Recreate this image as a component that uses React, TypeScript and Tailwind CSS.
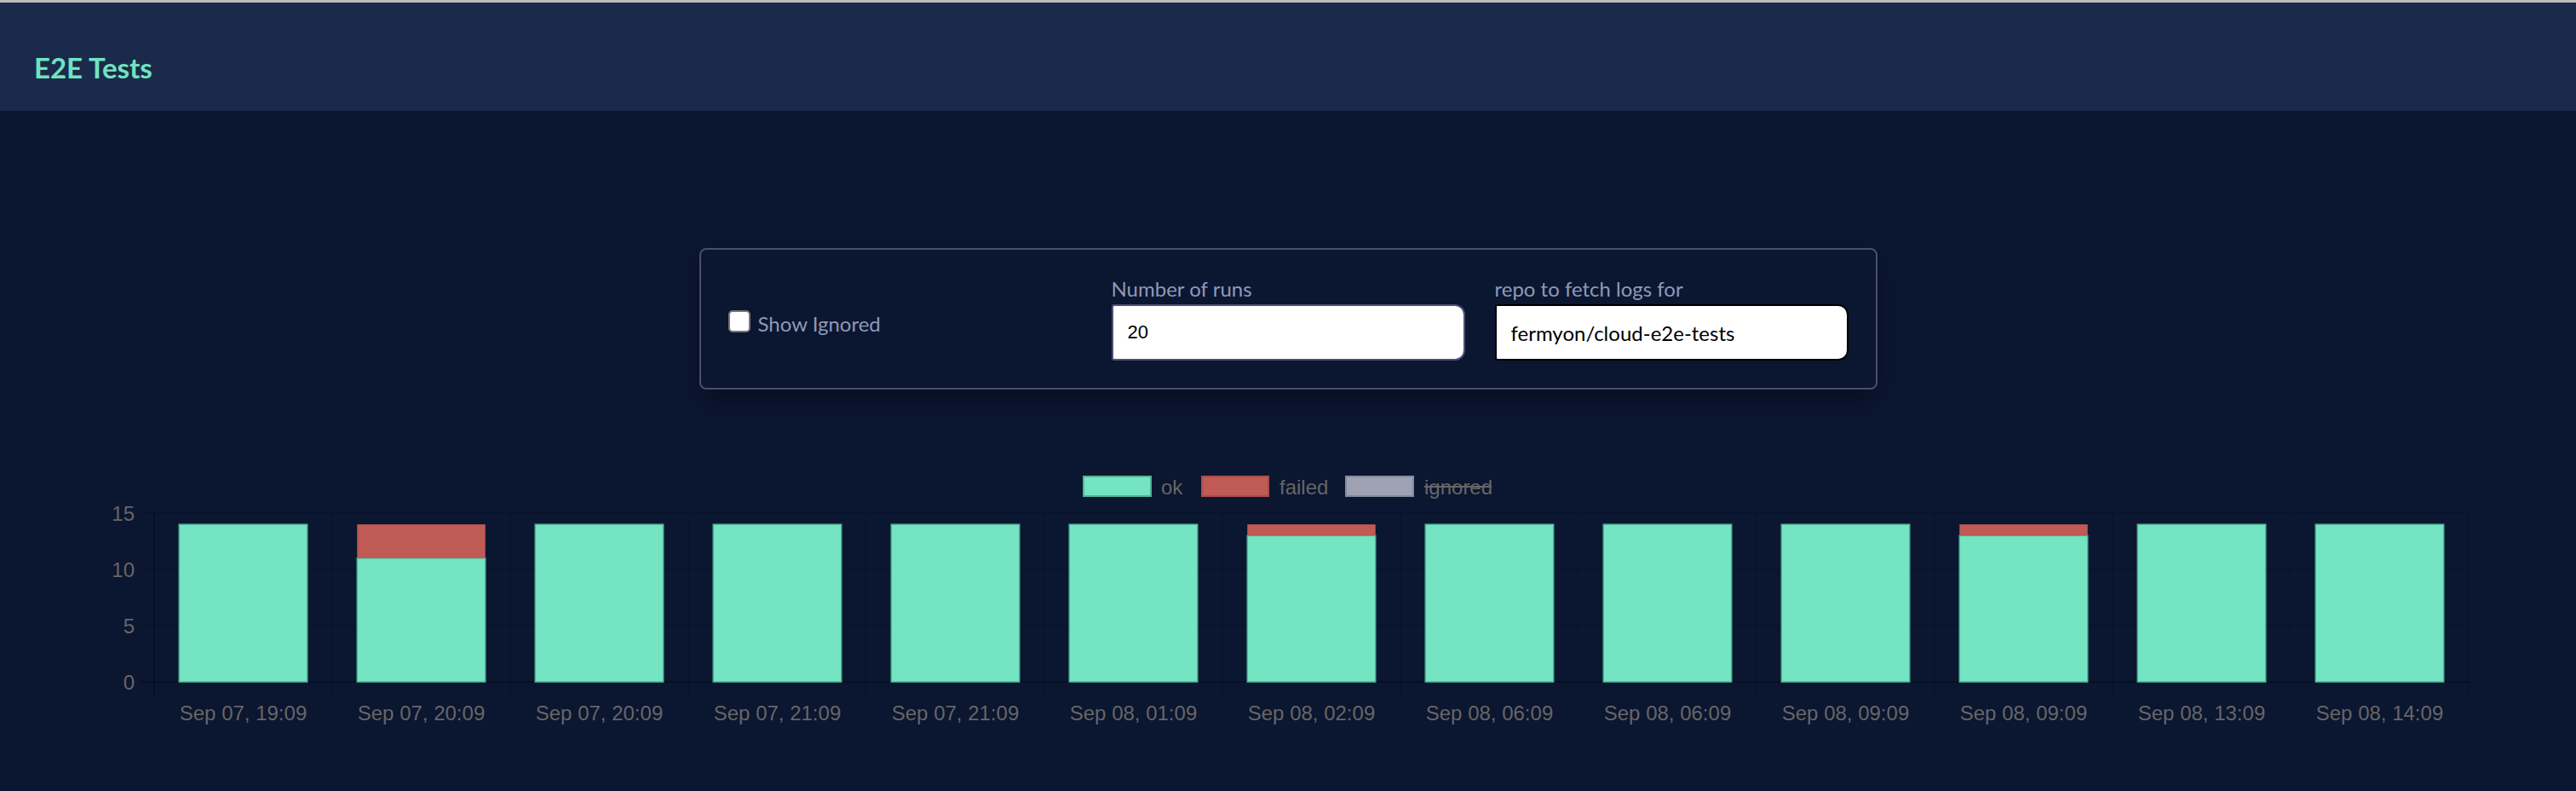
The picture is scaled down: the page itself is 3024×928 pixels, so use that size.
import { useState } from 'react';

type Run = { label: string; ok: number; failed: number };

const RUNS: Run[] = [
  { label: 'Sep 07, 19:09', ok: 14, failed: 0 },
  { label: 'Sep 07, 20:09', ok: 11, failed: 3 },
  { label: 'Sep 07, 20:09', ok: 14, failed: 0 },
  { label: 'Sep 07, 21:09', ok: 14, failed: 0 },
  { label: 'Sep 07, 21:09', ok: 14, failed: 0 },
  { label: 'Sep 08, 01:09', ok: 14, failed: 0 },
  { label: 'Sep 08, 02:09', ok: 13, failed: 1 },
  { label: 'Sep 08, 06:09', ok: 14, failed: 0 },
  { label: 'Sep 08, 06:09', ok: 14, failed: 0 },
  { label: 'Sep 08, 09:09', ok: 14, failed: 0 },
  { label: 'Sep 08, 09:09', ok: 13, failed: 1 },
  { label: 'Sep 08, 13:09', ok: 14, failed: 0 },
  { label: 'Sep 08, 14:09', ok: 14, failed: 0 },
];

const OK_COLOR = '#74e4c2';
const OK_BORDER = '#4fb594';
const FAILED_COLOR = '#c05a55';
const IGNORED_COLOR = '#9ea2b2';
const TICK_COLOR = '#666666';
const GRID_COLOR = 'rgba(0,0,0,0.12)';
const AXIS_COLOR = 'rgba(0,0,0,0.3)';
const CHART_FONT = "'Liberation Sans', Arial, sans-serif";

// chart geometry, in page pixels (the reference is a 2x canvas)
const LEFT = 181;
const RIGHT = 2898;
const TOP = 72;
const ZERO = 270;
const UNIT = (ZERO - TOP) / 15;
const SLOT = (RIGHT - LEFT) / RUNS.length;
const BAR = SLOT * 0.72;

const RunsChart = () => {
  const yTicks = [0, 5, 10, 15];

  return (
    <svg width={3024} height={350} viewBox="0 0 3024 350" className="block" fontFamily={CHART_FONT}>
      {/* legend */}
      <g fontSize={24} fill={TICK_COLOR}>
        <rect x={1272} y={29} width={79} height={23} fill={OK_COLOR} stroke={OK_BORDER} strokeWidth={2} />
        <text x={1363} y={41} dominantBaseline="central">
          ok
        </text>
        <rect x={1411} y={29} width={78} height={23} fill={FAILED_COLOR} stroke="#a94d49" strokeWidth={2} />
        <text x={1502} y={41} dominantBaseline="central">
          failed
        </text>
        <rect x={1580} y={29} width={79} height={23} fill={IGNORED_COLOR} stroke="#858a9c" strokeWidth={2} />
        <text x={1672} y={41} dominantBaseline="central">
          ignored
        </text>
        <line x1={1672} y1={41} x2={1751} y2={41} stroke={TICK_COLOR} strokeWidth={2} />
      </g>

      {/* grid */}
      {yTicks.map((t) => {
        const y = ZERO - t * UNIT;
        return (
          <line
            key={`h${t}`}
            x1={LEFT - 16}
            y1={y}
            x2={RIGHT}
            y2={y}
            stroke={t === 0 ? AXIS_COLOR : GRID_COLOR}
            strokeWidth={2}
          />
        );
      })}
      {RUNS.map((_, i) => (
        <line
          key={`v${i}`}
          x1={LEFT + i * SLOT}
          y1={TOP}
          x2={LEFT + i * SLOT}
          y2={ZERO + 16}
          stroke={i === 0 ? AXIS_COLOR : GRID_COLOR}
          strokeWidth={2}
        />
      ))}
      <line x1={RIGHT} y1={TOP} x2={RIGHT} y2={ZERO + 16} stroke={GRID_COLOR} strokeWidth={2} />

      {/* y ticks */}
      {yTicks.map((t) => (
        <text
          key={`y${t}`}
          x={158}
          y={ZERO - t * UNIT}
          textAnchor="end"
          dominantBaseline="central"
          fontSize={24}
          fill={TICK_COLOR}
        >
          {t}
        </text>
      ))}

      {/* bars */}
      {RUNS.map((run, i) => {
        const x = LEFT + i * SLOT + (SLOT - BAR) / 2;
        const okTop = ZERO - run.ok * UNIT;
        const failTop = okTop - run.failed * UNIT;
        return (
          <g key={`b${i}`}>
            <rect x={x} y={okTop} width={BAR} height={run.ok * UNIT} fill={OK_COLOR} stroke={OK_BORDER} strokeWidth={1.5} />
            {run.failed > 0 && (
              <rect x={x} y={failTop} width={BAR} height={run.failed * UNIT} fill={FAILED_COLOR} />
            )}
            <text
              x={LEFT + i * SLOT + SLOT / 2}
              y={306}
              textAnchor="middle"
              dominantBaseline="central"
              fontSize={24}
              fill={TICK_COLOR}
            >
              {run.label}
            </text>
          </g>
        );
      })}
    </svg>
  );
};

export default function App() {
  const [showIgnored, setShowIgnored] = useState(false);
  const [runs, setRuns] = useState('20');
  const [repo, setRepo] = useState('fermyon/cloud-e2e-tests');

  return (
    <div className="min-h-screen bg-[#0b1631]" style={{ fontFamily: 'Lato, "Noto Sans", sans-serif' }}>
      <header className="h-[130px] border-t-[3px] border-[#bdbdbd] bg-[#1b2a4a] pl-10 pt-[56px]">
        <h1 className="text-[33px] font-bold leading-[40px] text-[#6fe3c0]">E2E Tests</h1>
      </header>

      <main className="pt-[161px]">
        <div className="mx-auto grid w-[1383px] grid-cols-3 gap-[35px] rounded-lg border-2 border-[#474f6d] px-8 py-8 shadow-[0_12px_30px_rgba(0,0,0,0.35)]">
          <label className="flex items-start self-center pt-3">
            <input
              type="checkbox"
              checked={showIgnored}
              onChange={(e) => setShowIgnored(e.target.checked)}
              className="h-[26px] w-[26px] shrink-0 appearance-none rounded-[5px] border-2 border-[#767676] bg-white checked:bg-[#6fe3c0]"
            />
            <span className="ml-[9px] text-[24px] leading-[32px] text-[#8d9ab8]">Show Ignored</span>
          </label>

          <div className="flex flex-col">
            <span className="mb-1 text-[24px] leading-[28px] text-[#8d9ab8]">Number of runs</span>
            <input
              type="text"
              value={runs}
              onChange={(e) => setRuns(e.target.value)}
              className="h-[66px] rounded-l-[3px] rounded-r-xl border-2 border-[#4c5175] bg-white pl-[17px] text-[22px] text-black outline-none"
              style={{ fontFamily: "'Liberation Sans', Arial, sans-serif" }}
            />
          </div>

          <div className="flex flex-col">
            <span className="mb-1 text-[24px] leading-[28px] text-[#8d9ab8]">repo to fetch logs for</span>
            <input
              type="text"
              value={repo}
              onChange={(e) => setRepo(e.target.value)}
              className="h-[66px] rounded-l-[3px] rounded-r-xl border-2 border-black bg-white pl-[17px] text-[24px] text-black outline-none"
            />
          </div>
        </div>

        <div className="mt-[73px]">
          <RunsChart />
        </div>
      </main>
    </div>
  );
}
